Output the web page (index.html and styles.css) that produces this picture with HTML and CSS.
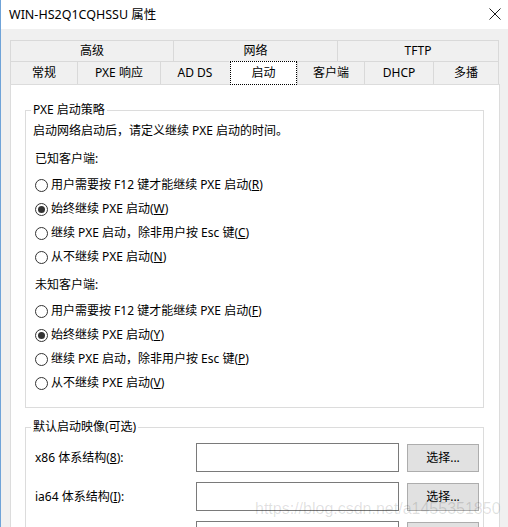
FILE: index.html
```html
<!DOCTYPE html>
<html lang="zh-CN">
<head>
<meta charset="utf-8">
<title>WIN-HS2Q1CQHSSU 属性</title>
<link rel="stylesheet" href="styles.css">
</head>
<body>
<div class="window">
  <div class="titlebar">
    <span class="title">WIN-HS2Q1CQHSSU 属性</span>
    <svg class="close" width="12" height="12" viewBox="0 0 12 12"><path d="M0.5 0.5 L11.5 11.5 M11.5 0.5 L0.5 11.5" stroke="#1a1a1a" stroke-width="1" fill="none"/></svg>
  </div>
  <div class="content">
    <div class="tabrow row1">
      <div class="tab">高级</div>
      <div class="tab">网络</div>
      <div class="tab">TFTP</div>
    </div>
    <div class="tabrow row2">
      <div class="tab">常规</div>
      <div class="tab">PXE 响应</div>
      <div class="tab">AD DS</div>
      <div class="tab sel">启动</div>
      <div class="tab">客户端</div>
      <div class="tab">DHCP</div>
      <div class="tab">多播</div>
    </div>
    <div class="panel">
      <fieldset class="group">
        <legend>PXE 启动策略</legend>
        <div class="desc">启动网络启动后，请定义继续 PXE 启动的时间。</div>
        <div class="sub">已知客户端:</div>
        <div class="radios">
          <div class="rrow"><span class="radio"></span>用户需要按 F12 键才能继续 PXE 启动(<u>R</u>)</div>
          <div class="rrow"><span class="radio on"></span>始终继续 PXE 启动(<u>W</u>)</div>
          <div class="rrow"><span class="radio"></span>继续 PXE 启动，除非用户按 Esc 键(<u>C</u>)</div>
          <div class="rrow"><span class="radio"></span>从不继续 PXE 启动(<u>N</u>)</div>
        </div>
        <div class="sub sub2">未知客户端:</div>
        <div class="radios">
          <div class="rrow"><span class="radio"></span>用户需要按 F12 键才能继续 PXE 启动(<u>F</u>)</div>
          <div class="rrow"><span class="radio on"></span>始终继续 PXE 启动(<u>Y</u>)</div>
          <div class="rrow"><span class="radio"></span>继续 PXE 启动，除非用户按 Esc 键(<u>P</u>)</div>
          <div class="rrow"><span class="radio"></span>从不继续 PXE 启动(<u>V</u>)</div>
        </div>
      </fieldset>
      <fieldset class="group group2">
        <legend>默认启动映像(可选)</legend>
        <div class="frow">
          <span class="flabel">x86 体系结构(<u>8</u>):</span>
          <span class="input"></span>
          <span class="btn">选择...</span>
        </div>
        <div class="frow">
          <span class="flabel">ia64 体系结构(<u>I</u>):</span>
          <span class="input"></span>
          <span class="btn">选择...</span>
        </div>
        <div class="frow">
          <span class="flabel"></span>
          <span class="input"></span>
          <span class="btn"></span>
        </div>
      </fieldset>
    </div>
  </div>
  <div class="watermark">https://blog.csdn.net/a1455351850</div>
</div>
</body>
</html>
```
FILE: styles.css
```css
* { box-sizing: border-box; }
html, body { margin: 0; padding: 0; }
body {
  width: 508px;
  height: 527px;
  overflow: hidden;
  background: #f0f0f0;
  font-family: "Noto Sans", "Noto Sans CJK SC", sans-serif;
  font-size: 12px;
  color: #000;
}
.window {
  position: relative;
  height: 527px;
  border-left: 1px solid #6fa3d8;
  overflow: hidden;
}
.titlebar {
  height: 29px;
  background: #fff;
  display: flex;
  align-items: center;
  justify-content: space-between;
  padding: 0 7px 0 8px;
}
.title { font-size: 12.5px; line-height: 16px; }
.close { margin-top: -2px; }
.content { padding: 11px 8px 0 9px; }
.tabrow { display: grid; }
.row1 { grid-template-columns: 163px 164px 162px; height: 21px; }
.row2 { grid-template-columns: 67px 83px 69px 68px 67px 69px 66px; height: 23px; }
.tab {
  border-top: 1px solid #d9d9d9;
  border-left: 1px solid #d9d9d9;
  display: flex;
  align-items: center;
  justify-content: center;
  line-height: 16px;
  background: #f0f0f0;
}
.tab:last-child { border-right: 1px solid #d9d9d9; }
.tab.sel {
  position: relative;
  z-index: 1;
  background: #fff;
  border: 1px dotted #000;
  height: 24px;
  margin-bottom: -1px;
  margin-left: 1px;
}
.panel {
  background: #fff;
  border: 1px solid #dcdcdc;
  height: 460px;
  padding: 17px 15px 0 14px;
}
.group {
  margin: 0;
  border: 1px solid #dcdcdc;
  padding: 0 9px 12px 9px;
  min-width: 0;
}
.group legend {
  padding: 0 2px;
  margin-left: -4px;
  line-height: 16px;
}
.desc { margin: 3px 0 0 -2px; line-height: 20px; }
.sub { margin-top: 8px; line-height: 20px; }
.sub2 { margin-top: 6px; }
.radios { margin-top: 4px; }
.rrow {
  height: 24px;
  display: flex;
  align-items: center;
  line-height: 16px;
}
.radio {
  width: 13px;
  height: 13px;
  border: 1px solid #333;
  border-radius: 50%;
  background: #fff;
  margin-right: 3px;
  display: flex;
  align-items: center;
  justify-content: center;
  flex: none;
}
.radio.on::after {
  content: "";
  width: 7px;
  height: 7px;
  border-radius: 50%;
  background: #333;
}
.group2 { margin-top: 11px; padding: 0 3px 20px 9px; }
.frow {
  display: flex;
  align-items: center;
  height: 29px;
  margin-top: 10px;
}
.group2 legend + .frow { margin-top: 8px; }
.flabel { width: 161px; flex: none; line-height: 16px; }
.input {
  width: 203px;
  height: 29px;
  flex: none;
  border: 1px solid #7a7a7a;
  background: #fff;
}
.btn {
  width: 72px;
  height: 28px;
  flex: none;
  margin-left: 8px;
  background: #e1e1e1;
  border: 1px solid #adadad;
  display: flex;
  align-items: center;
  justify-content: center;
  line-height: 16px;
}
.watermark {
  position: absolute;
  left: 254px;
  top: 500px;
  font-family: "Liberation Sans", sans-serif;
  font-size: 16px;
  line-height: 18px;
  color: rgba(0, 0, 0, 0.13);
  white-space: nowrap;
}
```
